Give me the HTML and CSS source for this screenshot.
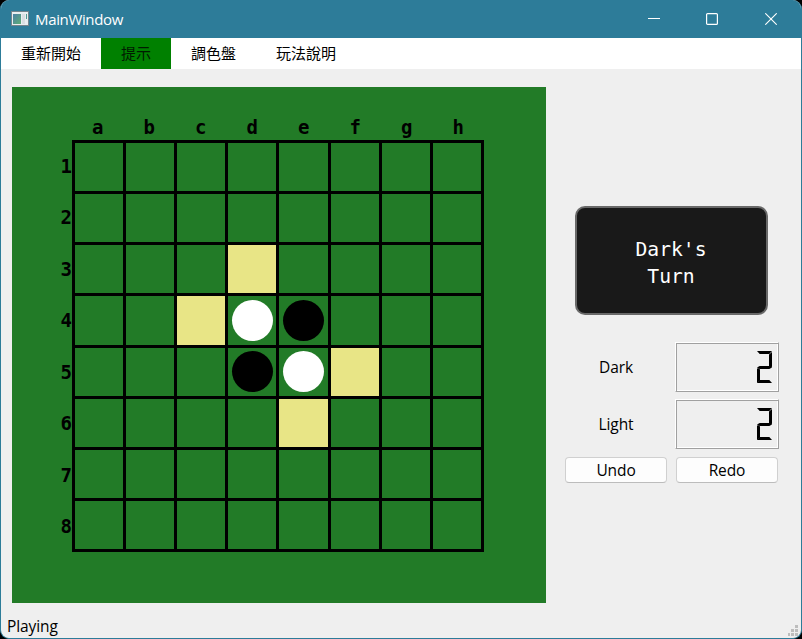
FILE: index.html
```html
<!DOCTYPE html>
<html lang="zh-Hant">
<head>
<meta charset="utf-8">
<title>MainWindow</title>
<link rel="stylesheet" href="styles.css">
</head>
<body>
<div class="window">
  <header class="titlebar">
    <svg class="app-icon" width="18" height="16" viewBox="0 0 18 16">
      <rect x="0.5" y="0.5" width="17" height="14" fill="#e9eef0" stroke="#74848c"/>
      <rect x="2" y="3" width="8" height="10" fill="url(#pane)"/>
      <rect x="11" y="3" width="3" height="10" fill="#d9dee2"/>
      <rect x="15" y="3" width="1" height="5" fill="#4f9a91"/>
      <defs><linearGradient id="pane" x1="0" y1="0" x2="1" y2="1"><stop offset="0" stop-color="#4b80a5"/><stop offset="1" stop-color="#5eae77"/></linearGradient></defs>
    </svg>
    <span class="title">MainWindow</span>
    <div class="controls">
      <svg width="12" height="12" viewBox="0 0 12 12"><path d="M0 5.5H12" stroke="#fff"/></svg>
      <svg width="12" height="12" viewBox="0 0 12 12"><rect x=".6" y=".6" width="10.8" height="10.8" rx="1" fill="none" stroke="#fff" stroke-width="1.2"/></svg>
      <svg width="12" height="12" viewBox="0 0 12 12"><path d="M.3 .3L11.7 11.7M11.7 .3L.3 11.7" stroke="#fff" stroke-width="1.1"/></svg>
    </div>
  </header>
  <nav class="menu">
    <span>重新開始</span><span class="active">提示</span><span>調色盤</span><span>玩法說明</span>
  </nav>
  <main class="content">
    <section class="board">
      <div class="files"><span>a</span><span>b</span><span>c</span><span>d</span><span>e</span><span>f</span><span>g</span><span>h</span></div>
      <div class="ranks"><span>1</span><span>2</span><span>3</span><span>4</span><span>5</span><span>6</span><span>7</span><span>8</span></div>
      <div class="grid">
        <i></i><i></i><i></i><i></i><i></i><i></i><i></i><i></i>
        <i></i><i></i><i></i><i></i><i></i><i></i><i></i><i></i>
        <i></i><i></i><i></i><i class="hint"></i><i></i><i></i><i></i><i></i>
        <i></i><i></i><i class="hint"></i><i><b class="light"></b></i><i><b class="dark"></b></i><i></i><i></i><i></i>
        <i></i><i></i><i></i><i class="upper"><b class="dark"></b></i><i class="upper"><b class="light"></b></i><i class="hint"></i><i></i><i></i>
        <i></i><i></i><i></i><i></i><i class="hint"></i><i></i><i></i><i></i>
        <i></i><i></i><i></i><i></i><i></i><i></i><i></i><i></i>
        <i></i><i></i><i></i><i></i><i></i><i></i><i></i><i></i>
      </div>
    </section>
    <aside class="panel">
      <div class="turn">Dark's<br>Turn</div>
      <div class="scores">
        <label>Dark</label>
        <div class="lcd"><div class="digit" role="img" aria-label="2"><i class="top"></i><i class="right"></i><i class="mid"></i><i class="left"></i><i class="bottom"></i></div></div>
        <label>Light</label>
        <div class="lcd"><div class="digit" role="img" aria-label="2"><i class="top"></i><i class="right"></i><i class="mid"></i><i class="left"></i><i class="bottom"></i></div></div>
      </div>
      <div class="actions"><button>Undo</button><button>Redo</button></div>
    </aside>
  </main>
  <footer class="status">
    <span>Playing</span>
    <svg class="grip" width="10" height="11" viewBox="0 0 10 11" fill="#bdbdbd"><path d="M7 0h3v3h-3zM3 4h3v3h-3zM7 4h3v3h-3zM0 8h2v3h-2zM3 8h3v3h-3zM7 8h3v3h-3z"/></svg>
  </footer>
</div>
</body>
</html>
```
FILE: styles.css
```css
* { box-sizing: border-box; }
body {
  margin: 0;
  background: #000;
  font-family: "Open Sans", "Noto Sans CJK TC", sans-serif;
  font-size: 15.5px;
  letter-spacing: -0.1px;
  color: #000;
}
.window {
  width: 802px;
  height: 639px;
  display: flex;
  flex-direction: column;
  background: #efefef;
  border: 1px solid #2d7c99;
  border-top: 0;
  border-radius: 9px;
  overflow: hidden;
}
.titlebar {
  height: 38px;
  flex: none;
  display: flex;
  align-items: center;
  background: #2d7c99;
  color: #fff;
  padding-left: 10px;
}
.app-icon { margin-right: 6px; }
.title { font-size: 15px; letter-spacing: -0.35px; }
.controls {
  display: flex;
  gap: 47px;
  margin-left: auto;
  padding-right: 24px;
}
.controls svg:first-child { margin-right: -1px; }
.menu {
  height: 31px;
  flex: none;
  display: flex;
  background: #fff;
  font: 15px/30px "Noto Sans CJK TC", sans-serif;
  letter-spacing: 0;
}
.menu span { padding: 0 20px; }
.menu .active { background: #008000; color: #001c00; }
.content { flex: none; display: flex; padding: 18px 0 0 11px; }
.board {
  width: 534px;
  height: 516px;
  flex: none;
  display: grid;
  grid-template: 53px 412px / 60px 412px;
  background: #227b27;
  font: bold 19px "DejaVu Sans Mono", monospace;
  letter-spacing: 0;
}
.files {
  grid-column: 2;
  display: grid;
  grid-template-columns: repeat(8, 51.5px);
  align-items: end;
  text-align: center;
  line-height: 24px;
  padding-bottom: 1px;
}
.ranks {
  grid-row: 2;
  display: grid;
  grid-template-rows: repeat(8, 51.5px);
  align-items: center;
  text-align: right;
}
.grid {
  width: 412px;
  height: 412px;
  display: grid;
  grid-template-columns: repeat(4, 48px) 49px repeat(3, 48px);
  grid-template-rows: repeat(3, 48px) 49px repeat(4, 48px);
  gap: 3px;
  padding: 3px;
  background: #000;
}
.grid i { background: #227b27; padding: 4px; }
.grid i.upper { padding-top: 3px; }
.grid i.hint { background: #e8e586; }
.grid b {
  display: block;
  width: 41px;
  height: 41px;
  border-radius: 50%;
}
.dark { background: #000; }
.light { background: #fff; }
.panel { width: 214px; margin: 119px 0 0 19px; }
.turn {
  width: 193px;
  height: 109px;
  margin-left: 10px;
  display: flex;
  align-items: center;
  justify-content: center;
  text-align: center;
  background: #191919;
  color: #fff;
  border: 2px solid #696969;
  border-radius: 10px;
  font: 19.7px/27px "DejaVu Sans Mono", monospace;
  letter-spacing: 0;
  padding: 5px 1px 0 0;
}
.scores {
  display: grid;
  grid-template-columns: 102px 104px;
  grid-template-rows: 50px 50px;
  gap: 7px 8px;
  margin-top: 27px;
}
.scores label { text-align: center; line-height: 51px; }
.lcd {
  border: 1px solid;
  border-color: #fff #a0a0a0 #a0a0a0 #fff;
  box-shadow: inset 1px 1px #a0a0a0, inset -1px -1px #fff;
  padding: 8px 6px 0 0;
  display: flex;
  justify-content: flex-end;
}
.digit {
  width: 15px;
  height: 32px;
  display: grid;
  grid-template: 32px / 15px;
}
.digit i { grid-area: 1 / 1; background: #000; }
.digit .top { height: 3px; clip-path: polygon(0 0, 100% 0, 82% 100%, 18% 100%); }
.digit .right { width: 3px; height: 16px; justify-self: end; margin-top: 1px; clip-path: polygon(100% 0, 100% 90%, 60% 100%, 0 92%, 0 16%); }
.digit .mid { height: 3px; margin-top: 15px; clip-path: polygon(0 50%, 18% 0, 82% 0, 100% 50%, 82% 100%, 18% 100%); }
.digit .left { width: 3px; height: 15px; margin-top: 17px; clip-path: polygon(0 5%, 40% 0, 100% 10%, 100% 84%, 0 100%); }
.digit .bottom { height: 3px; margin-top: 29px; clip-path: polygon(18% 0, 82% 0, 100% 100%, 0 100%); }
.actions { display: flex; gap: 9px; margin-top: 8px; }
button {
  width: 102px;
  height: 26px;
  padding: 0;
  background: #fdfdfd;
  border: 1px solid #d0d0d0;
  border-bottom-color: #bcbcbc;
  border-radius: 4px;
  font: 15.5px "Open Sans", sans-serif;
  letter-spacing: -0.1px;
}
.status {
  flex: 1;
  display: flex;
  justify-content: space-between;
  align-items: flex-end;
  padding: 0 3px 2px 6px;
}
.status span { line-height: 20px; }
```
